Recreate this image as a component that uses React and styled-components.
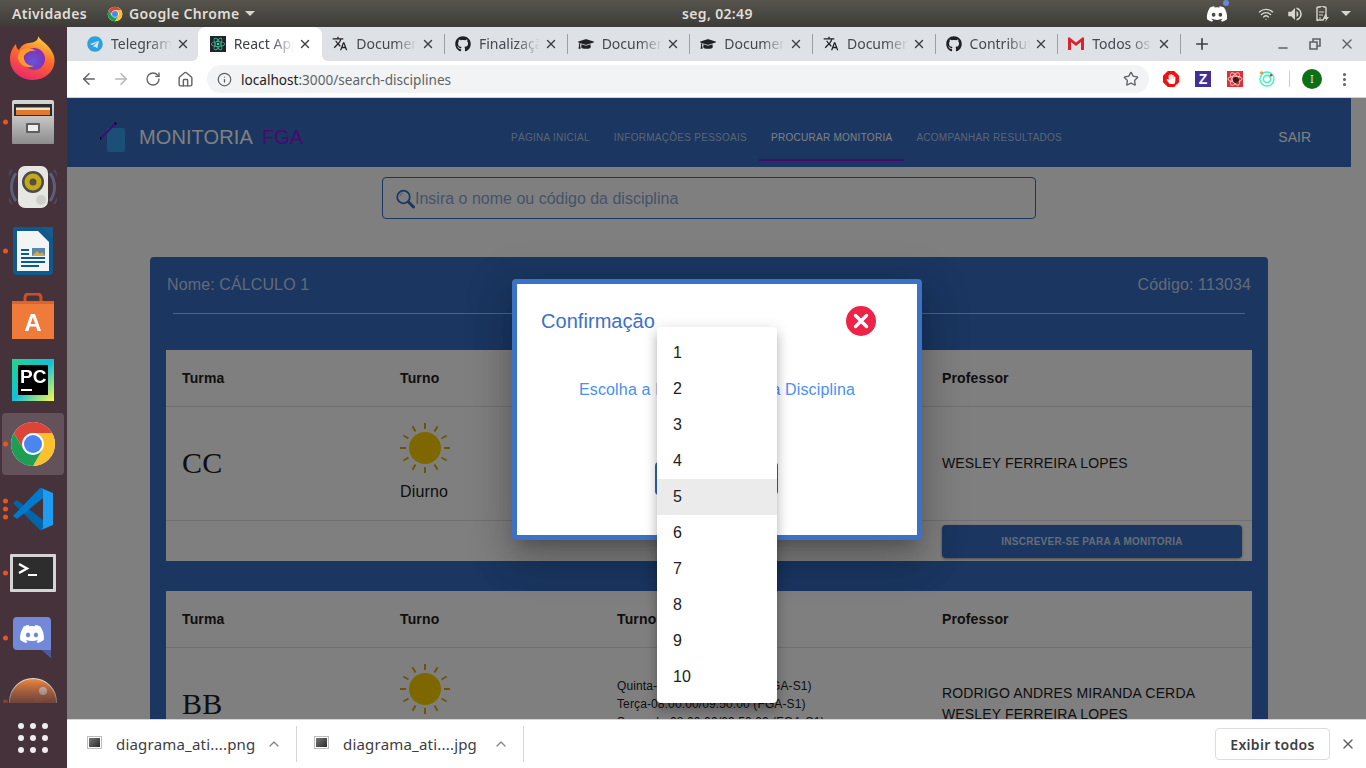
import React from 'react';
import styled, { createGlobalStyle } from 'styled-components';
import {
  ArrowLeft, ArrowRight, RotateCw, Home, Info, Star, MoreVertical, Plus, Minus, X, ChevronUp, Wifi,
} from 'lucide-react';
import { FaGithub, FaDiscord, FaTelegram, FaGraduationCap, FaHandPaper } from 'react-icons/fa';
import { MdTranslate, MdVolumeUp } from 'react-icons/md';
import { SiReact } from 'react-icons/si';

const uiFont = '"Noto Sans", "Open Sans", sans-serif';
const pageFont = '"Liberation Sans", Arial, sans-serif';
const blue = '#346cc2';

const GlobalStyle = createGlobalStyle`
  html, body {
    margin: 0;
    padding: 0;
    overflow: hidden;
    background: #46323a;
  }
  * { box-sizing: border-box; }
`;

const Desktop = styled.div`
  width: 1366px;
  height: 768px;
  display: flex;
  flex-direction: column;
  overflow: hidden;
`;

const TopBar = styled.div`
  height: 27px;
  flex: none;
  display: flex;
  align-items: center;
  background: linear-gradient(#57554d, #3c3b37);
  color: #e0ddd6;
  font: 600 14px ${uiFont};
  letter-spacing: 0.35px;
`;

const TopLeft = styled.div`
  width: 682px;
  display: flex;
  align-items: center;
  padding-left: 12px;
`;

const AppName = styled.div`
  display: flex;
  align-items: center;
  gap: 6px;
  margin-left: 20px;
`;

const Caret = styled.span`
  width: 0;
  height: 0;
  border-left: 5px solid transparent;
  border-right: 5px solid transparent;
  border-top: 5px solid #d8d5ce;
  margin-left: ${(p) => p.$left || 0}px;
`;

const TopRight = styled.div`
  margin-left: auto;
  display: flex;
  align-items: center;
  gap: 12px;
  padding-right: 15px;
  color: #d8d5ce;
`;

const TopDiscord = styled.span`
  position: relative;
  display: flex;
  color: #fff;
  margin-right: 18px;
  &::after {
    content: '';
    position: absolute;
    top: -3px;
    right: -1px;
    width: 6px;
    height: 6px;
    border-radius: 50%;
    background: #6f86d6;
  }
`;

const Body = styled.div`
  flex: 1;
  display: flex;
  min-height: 0;
`;

const Dock = styled.div`
  width: 67px;
  flex: none;
  display: flex;
  flex-direction: column;
  background: #46323a;
`;

const DockApps = styled.div`
  height: 676px;
  overflow: hidden;
  display: flex;
  flex-direction: column;
  gap: 2.4px;
  mask-image: linear-gradient(#000 650px, rgba(0, 0, 0, 0.35) 676px);
`;

const DockItem = styled.div`
  position: relative;
  flex: none;
  width: 62px;
  height: 62px;
  margin-left: 2px;
  border-radius: 4px;
  display: flex;
  align-items: center;
  justify-content: center;
  background: ${(p) => (p.$active ? '#64525a' : 'transparent')};
`;

const RunDots = styled.div`
  position: absolute;
  left: 1px;
  top: 50%;
  transform: translateY(-50%);
  display: flex;
  flex-direction: column;
  gap: 3px;
`;

const RunDot = styled.span`
  width: 5px;
  height: 5px;
  border-radius: 50%;
  background: #e95420;
`;

const AppGrid = styled.div`
  margin: 20px 0 0 18px;
  width: 30px;
  display: grid;
  grid-template-columns: repeat(3, 6px);
  gap: 6px;
`;

const GridDot = styled.span`
  width: 6px;
  height: 6px;
  border-radius: 50%;
  background: #eee;
`;

const Browser = styled.div`
  flex: 1;
  min-width: 0;
  display: flex;
  flex-direction: column;
`;

const TabStrip = styled.div`
  height: 34px;
  flex: none;
  display: flex;
  align-items: stretch;
  padding-left: 10px;
  background: #dee1e6;
`;

const Tab = styled.div`
  position: relative;
  width: ${(p) => (p.$active ? 124.67 : 122.67)}px;
  margin-left: ${(p) => (p.$active ? -2 : 0)}px;
  flex: none;
  display: flex;
  align-items: center;
  padding: 0 10px 1px ${(p) => (p.$active ? 12 : 10)}px;
  font: 14px ${uiFont};
  color: ${(p) => (p.$active ? '#3c4043' : '#45494f')};
  background: ${(p) => (p.$active ? '#fff' : 'transparent')};
  border-radius: 8px 8px 0 0;
  &::before {
    content: '';
    display: ${(p) => (p.$active ? 'block' : 'none')};
    position: absolute;
    left: -6px;
    bottom: 0;
    width: 6px;
    height: 6px;
    background: radial-gradient(circle at 0 0, transparent 6px, #fff 6px);
  }
  &::after {
    content: '';
    display: ${(p) => (p.$active || p.$line ? 'block' : 'none')};
    position: absolute;
    right: ${(p) => (p.$active ? -6 : 0)}px;
    bottom: ${(p) => (p.$active ? 0 : 7)}px;
    width: ${(p) => (p.$active ? 6 : 1)}px;
    height: ${(p) => (p.$active ? 6 : 20)}px;
    background: ${(p) => (p.$active ? 'radial-gradient(circle at 100% 0, transparent 6px, #fff 6px)' : '#9aa0a6')};
  }
`;

const TabIcon = styled.span`
  width: 16px;
  height: 16px;
  flex: none;
  display: flex;
  align-items: center;
  justify-content: center;
  color: ${(p) => p.$color || '#202124'};
`;

const ReactIcon = styled(TabIcon)`
  background: #20232a;
  color: #3fd6a5;
`;

const TabTitle = styled.span`
  flex: 1;
  margin-left: 8px;
  white-space: nowrap;
  overflow: hidden;
  mask-image: linear-gradient(to right, #000 58%, transparent 94%);
`;

const StripButton = styled.span`
  display: flex;
  align-items: center;
  color: #3c4043;
  margin-left: ${(p) => p.$left}px;
  padding-top: ${(p) => p.$top || 0}px;
`;

const Toolbar = styled.div`
  height: 37px;
  flex: none;
  display: flex;
  align-items: center;
  padding-left: 12px;
  background: #fff;
  border-bottom: 1px solid #d0d2d6;
`;

const NavButton = styled.span`
  width: 20px;
  display: flex;
  justify-content: center;
  margin-right: ${(p) => p.$gap ?? 12}px;
  color: ${(p) => (p.$off ? '#b4b6b9' : '#5f6368')};
`;

const UrlPill = styled.div`
  width: 942px;
  height: 28px;
  margin-left: 8px;
  padding: 0 10px 0 10px;
  display: flex;
  align-items: center;
  gap: 9px;
  border-radius: 14px;
  background: #f1f3f4;
  color: #5f6368;
  font: 13.6px ${uiFont};
`;

const UrlHost = styled.span`
  color: #202124;
`;

const UrlText = styled.span`
  flex: 1;
`;

const Extensions = styled.div`
  display: flex;
  align-items: center;
  margin-left: 14px;
  gap: 16px;
`;

const ZBadge = styled.span`
  width: 16px;
  height: 16px;
  display: flex;
  align-items: center;
  justify-content: center;
  background: #42309a;
  color: #fff;
  font: 700 14px ${pageFont};
`;

const StopBadge = styled.span`
  position: relative;
  display: flex;
  width: 16px;
  height: 16px;
  align-items: center;
  justify-content: center;
  color: #fff;
  background: #f01010;
  clip-path: polygon(30% 0, 70% 0, 100% 30%, 100% 70%, 70% 100%, 30% 100%, 0 70%, 0 30%);
`;

const ToolbarLine = styled.span`
  width: 1px;
  height: 16px;
  background: #ccc;
  margin-left: 14px;
`;

const Avatar = styled.span`
  width: 20px;
  height: 20px;
  margin-left: 12px;
  border-radius: 50%;
  background: #0d7016;
  color: #e8e8e8;
  display: flex;
  align-items: center;
  justify-content: center;
  font: 10px ${uiFont};
`;

const MenuDots = styled.span`
  display: flex;
  margin-left: 14px;
  color: #5f6368;
`;

const Page = styled.div`
  position: relative;
  flex: 1;
  min-height: 0;
  overflow: hidden;
  background: #fff;
  font-family: ${pageFont};
`;

const Scroller = styled.div`
  width: 1284px;
`;

const Header = styled.header`
  height: 69px;
  display: flex;
  align-items: center;
  padding: 15px 40px 6px 33px;
  background: ${blue};
  color: #fff;
`;

const Brand = styled.div`
  width: 399px;
  display: flex;
  align-items: center;
  font-size: 20px;
  letter-spacing: 0.1px;
`;

const BrandName = styled.span`
  margin-left: 13px;
`;

const BrandAccent = styled.span`
  margin-left: 9px;
  color: #9412dc;
`;

const Nav = styled.nav`
  display: flex;
  height: 48px;
`;

const NavTab = styled.div`
  display: flex;
  align-items: center;
  padding: 0 12px;
  font-size: 10px;
  letter-spacing: 0.27px;
  white-space: nowrap;
  color: ${(p) => (p.$active ? '#fff' : 'rgba(255, 255, 255, 0.65)')};
  box-shadow: ${(p) => (p.$active ? 'inset 0 -2px 0 #9412dc' : 'none')};
`;

const Logout = styled.div`
  margin-left: auto;
  font-size: 14px;
`;

const SearchBox = styled.div`
  width: 654px;
  height: 42px;
  margin: 10px auto 0;
  display: flex;
  align-items: center;
  padding: 1px 0 0 13px;
  border: 1px solid ${blue};
  border-radius: 4px;
  color: #8ba6d3;
  font-size: 16px;
`;

const Card = styled.section`
  width: 1118px;
  margin: 38px auto 0;
  padding: 0 16px;
  background: ${blue};
  border-radius: 4px;
`;

const CardTitle = styled.div`
  height: 54px;
  display: flex;
  align-items: center;
  justify-content: space-between;
  padding: 1px 1px 0 1px;
  color: rgba(255, 255, 255, 0.72);
  font-size: 16px;
  letter-spacing: 0.12px;
`;

const Divider = styled.hr`
  margin: 2px 7px 36px;
  border: 0;
  border-top: 1px solid rgba(255, 255, 255, 0.6);
`;

const ClassTable = styled.div`
  background: #fff;
  color: #212121;
  margin-bottom: 30px;
`;

const ClassRow = styled.div`
  display: grid;
  grid-template-columns: 218px 217px 325px 326px;
  min-height: ${(p) => p.$height}px;
  padding-bottom: ${(p) => p.$bottom || 0}px;
  align-items: center;
  border-bottom: ${(p) => (p.$last ? '0' : '1px solid #e0e0e0')};
`;

const HeadCell = styled.div`
  padding-left: 16px;
  font-size: 14px;
  font-weight: 700;
  letter-spacing: 0.15px;
`;

const Cell = styled.div`
  padding-left: 16px;
  font-size: 14px;
  line-height: 21px;
  letter-spacing: 0.15px;
`;

const ClassName = styled(Cell)`
  margin-top: -1px;
  font: 30px "Liberation Serif", "Times New Roman", serif;
`;

const ShiftCell = styled(Cell)`
  display: flex;
  flex-direction: column;
  align-items: flex-start;
  gap: 8px;
  margin-top: -2px;
  font-size: 16px;
`;

const ScheduleCell = styled(Cell)`
  font-size: 12px;
  line-height: 18px;
  letter-spacing: 0.12px;
`;

const SubscribeButton = styled.div`
  height: 33px;
  width: 300px;
  margin-top: 1px;
  border-radius: 4px;
  background: ${blue};
  color: rgba(255, 255, 255, 0.75);
  box-shadow: 0 1px 3px rgba(0, 0, 0, 0.4);
  display: flex;
  align-items: center;
  justify-content: center;
  font-size: 10px;
  font-weight: 700;
  letter-spacing: 0.25px;
`;

const ButtonCell = styled.div`
  padding-left: 16px;
`;

const Backdrop = styled.div`
  position: absolute;
  inset: 0;
  background: rgba(0, 0, 0, 0.5);
`;

const Modal = styled.div`
  position: absolute;
  left: 445px;
  top: 181px;
  width: 410px;
  height: 261px;
  padding: 0 41px 0 24px;
  background: #fff;
  border: 5px solid #3b71c6;
  border-radius: 4px;
  box-shadow: 0 11px 15px -7px rgba(0, 0, 0, 0.2), 0 24px 38px 3px rgba(0, 0, 0, 0.14), 0 9px 46px 8px rgba(0, 0, 0, 0.12);
`;

const ModalHead = styled.div`
  display: flex;
  align-items: center;
  justify-content: space-between;
  height: 74px;
  color: #3b71c6;
  font-size: 20px;
  letter-spacing: 0.05px;
`;

const ModalText = styled.div`
  margin: 23px -17px 0 0;
  color: #4a90f2;
  font-size: 16px;
  line-height: 18px;
  letter-spacing: 0.15px;
  text-align: center;
`;

const ModalButton = styled.div`
  width: 123px;
  height: 33px;
  margin: 63px auto 0;
  position: relative;
  left: 8px;
  background: #2f66b8;
  border-radius: 4px;
`;

const Menu = styled.ul`
  position: absolute;
  left: 590px;
  top: 229px;
  width: 120px;
  margin: 0;
  padding: 8px 0;
  list-style: none;
  background: #fff;
  border-radius: 4px;
  box-shadow: 0 5px 5px -3px rgba(0, 0, 0, 0.2), 0 8px 10px 1px rgba(0, 0, 0, 0.14), 0 3px 14px 2px rgba(0, 0, 0, 0.12);
`;

const MenuItem = styled.li`
  height: 36px;
  padding-left: 16px;
  display: flex;
  align-items: center;
  font-size: 16px;
  color: #212121;
  background: ${(p) => (p.$hover ? '#ebebeb' : 'transparent')};
`;

const Downloads = styled.div`
  height: 49px;
  flex: none;
  display: flex;
  align-items: center;
  padding-right: 10px;
  background: #fff;
  border-top: 1px solid #d4d4d4;
  font: 14px ${uiFont};
  color: #3c4043;
`;

const Download = styled.div`
  width: ${(p) => p.$width}px;
  height: 36px;
  display: flex;
  align-items: center;
  padding-left: ${(p) => p.$pad}px;
  border-right: 1px solid #d6d6d6;
`;

const FileThumb = styled.span`
  width: 15px;
  height: 13px;
  margin: -4px 14px 0 0;
  flex: none;
  border: 1px solid #bdbdbd;
  box-shadow: inset 0 0 0 1px #fff;
  background: linear-gradient(135deg, #808080, #222);
`;

const FileName = styled.span`
  flex: 1;
  font-size: 15px;
  letter-spacing: 0.2px;
  white-space: nowrap;
`;

const FileArrow = styled.span`
  display: flex;
  color: #80868b;
  margin-right: 14px;
`;

const ShowAll = styled.div`
  margin-left: auto;
  width: 115px;
  height: 32px;
  display: flex;
  align-items: center;
  justify-content: center;
  border: 1px solid #dadce0;
  border-radius: 4px;
  font-weight: 600;
  font-size: 14px;
  letter-spacing: 0.3px;
`;

const CloseBar = styled.span`
  display: flex;
  margin-left: 10px;
  color: #5f6368;
`;

function ChromeLogo({ size }) {
  return (
    <svg width={size} height={size} viewBox="0 0 48 48">
      <circle cx="24" cy="24" r="22" fill="#fff" />
      <path d="M24 13H43A22 22 0 0 0 5 13L14.5 29.5A11 11 0 0 1 24 13Z" fill="#db4437" />
      <path d="M43 13A22 22 0 0 1 24 46L33.5 29.5A11 11 0 0 0 24 13Z" fill="#fbc02d" />
      <path d="M24 46A22 22 0 0 1 5 13L14.5 29.5A11 11 0 0 0 33.5 29.5Z" fill="#1e9e54" />
      <circle cx="24" cy="24" r="9" fill="#4a85f0" />
    </svg>
  );
}

function Firefox() {
  return (
    <svg width="46" height="46" viewBox="0 0 46 46">
      <defs>
        <linearGradient id="ffBody" x1="0.7" y1="0" x2="0.3" y2="1">
          <stop offset="0" stopColor="#ffd43a" />
          <stop offset="0.45" stopColor="#ff6a2a" />
          <stop offset="1" stopColor="#e8256f" />
        </linearGradient>
        <radialGradient id="ffCore" cx="0.45" cy="0.6" r="0.6">
          <stop offset="0" stopColor="#5f58d8" />
          <stop offset="1" stopColor="#8b2bb8" />
        </radialGradient>
      </defs>
      <path d="M28 1C31 7 40 9 44 21C47 34 37 45 23 45C10 45 0 36 0 24C0 17 3 12 6 9C6 12 7 14 9 15C11 11 15 8 19 8C24 8 29 5 28 1Z" fill="url(#ffBody)" />
      <circle cx="24" cy="24" r="11" fill="url(#ffCore)" />
      <path d="M11 15C16 12 23 13 26 16C21 15 16 17 14 21C13 26 17 31 24 31C18 34 10 31 8 24C7 20 9 17 11 15Z" fill="#ff9a2e" />
    </svg>
  );
}

function Cabinet() {
  return (
    <svg width="44" height="44" viewBox="0 0 44 44">
      <defs>
        <linearGradient id="cabBody" x1="0" y1="0" x2="0" y2="1">
          <stop offset="0" stopColor="#d6d6d6" />
          <stop offset="1" stopColor="#8e8e8e" />
        </linearGradient>
        <linearGradient id="cabFront" x1="0" y1="0" x2="0" y2="1">
          <stop offset="0" stopColor="#c6c6c6" />
          <stop offset="1" stopColor="#8c8c8c" />
        </linearGradient>
      </defs>
      <rect x="1" y="0" width="42" height="44" rx="2" fill="url(#cabBody)" />
      <rect x="3" y="4" width="38" height="12" fill="#2b2b2b" />
      <rect x="5" y="7" width="34" height="8" fill="#e07a2c" />
      <rect x="5" y="8" width="34" height="2" fill="#f6e2c8" />
      <rect x="1" y="16" width="42" height="28" rx="1" fill="url(#cabFront)" />
      <rect x="15" y="23" width="14" height="10" rx="1" fill="#5e5e5e" />
      <rect x="17" y="25" width="10" height="6" fill="#eee" />
    </svg>
  );
}

function Speaker() {
  return (
    <svg width="48" height="44" viewBox="0 0 48 44">
      <path d="M7 8A24 24 0 0 0 7 36M41 8A24 24 0 0 1 41 36" fill="none" stroke="#5c5f78" strokeWidth="3" />
      <path d="M3 5A28 28 0 0 0 3 39M45 5A28 28 0 0 1 45 39" fill="none" stroke="#50485c" strokeWidth="2" />
      <rect x="9" y="1" width="30" height="42" rx="7" fill="#e6e6e2" />
      <circle cx="24" cy="17" r="11" fill="#4b4b48" />
      <circle cx="24" cy="17" r="8.5" fill="#c4a81c" />
      <circle cx="24" cy="17" r="3.5" fill="#57503a" />
      <circle cx="32" cy="35" r="5" fill="#cfcfca" />
    </svg>
  );
}

function Writer() {
  return (
    <svg width="40" height="48" viewBox="0 0 40 48">
      <path d="M2 0H27L40 13V44Q40 48 36 48H4Q0 48 0 44V2Q0 0 2 0Z" fill="#0f5a8c" />
      <path d="M4 4H25L36 15V44H4Z" fill="#f3f4f4" />
      <path d="M27 0L40 13V0Z" fill="#135c8d" />
      <rect x="8" y="22" width="8" height="2" fill="#0f5a8c" />
      <rect x="8" y="26" width="8" height="2" fill="#0f5a8c" />
      <rect x="8" y="30" width="24" height="2" fill="#0f5a8c" />
      <rect x="8" y="34" width="24" height="2" fill="#0f5a8c" />
      <rect x="8" y="38" width="18" height="2" fill="#0f5a8c" />
      <rect x="19" y="21" width="13" height="8" fill="#5a88a8" />
      <path d="M19 29L24 24L27 27L29 25L32 29Z" fill="#d8a840" />
    </svg>
  );
}

function StoreBag() {
  return (
    <svg width="42" height="46" viewBox="0 0 42 46">
      <path d="M13 10V5Q13 1 17 1H25Q29 1 29 5V10" fill="none" stroke="#c9502a" strokeWidth="3" />
      <rect y="8" width="42" height="38" fill="#ef7b3b" />
      <rect y="8" width="42" height="3" fill="#d9642c" />
      <text x="21" y="38" textAnchor="middle" fontFamily="Liberation Sans" fontWeight="700" fontSize="24" fill="#fff">A</text>
    </svg>
  );
}

function PyCharm() {
  return (
    <svg width="42" height="42" viewBox="0 0 42 42">
      <defs>
        <linearGradient id="pcBg" x1="0" y1="0" x2="1" y2="1">
          <stop offset="0" stopColor="#21d789" />
          <stop offset="0.5" stopColor="#12c0d8" />
          <stop offset="1" stopColor="#fcf84a" />
        </linearGradient>
      </defs>
      <rect width="42" height="42" fill="url(#pcBg)" />
      <rect x="6" y="6" width="30" height="30" fill="#000" />
      <text x="8" y="24" fontFamily="Liberation Sans" fontWeight="700" fontSize="19" fill="#fff">PC</text>
      <rect x="9" y="30" width="11" height="2" fill="#fff" />
    </svg>
  );
}

function VsCode() {
  return (
    <svg width="42" height="42" viewBox="0 0 42 42">
      <path d="M1 15L5 12L31 32V41L28 42Z" fill="#0065a9" />
      <path d="M1 28L5 31L31 10V1L28 0Z" fill="#007acc" />
      <path d="M29 0L41 5V37L29 42L31 40V2Z" fill="#1f9cf0" />
    </svg>
  );
}

function TerminalIcon() {
  return (
    <svg width="46" height="38" viewBox="0 0 46 38">
      <rect width="46" height="38" rx="1" fill="#d4d4d4" />
      <rect x="3" y="3" width="40" height="32" fill="#2d2d2d" />
      <path d="M9 10L17 14.5L9 19" fill="none" stroke="#fff" strokeWidth="2.4" />
      <rect x="18" y="20" width="9" height="2" fill="#fff" />
    </svg>
  );
}

function DiscordTile() {
  return (
    <svg width="40" height="42" viewBox="0 0 40 42">
      <path d="M4 0H34Q38 0 38 4V41L29 33H4Q0 33 0 29V4Q0 0 4 0Z" fill="#7289da" />
      <path d="M29 33L38 41V33Z" fill="#4a5a9c" />
      <foreignObject x="6" y="4" width="26" height="26">
        <FaDiscord size={26} color="#fff" />
      </foreignObject>
    </svg>
  );
}

function Postman() {
  return (
    <svg width="48" height="48" viewBox="0 0 48 48">
      <defs>
        <linearGradient id="pmBg" x1="0" y1="0" x2="0" y2="1">
          <stop offset="0" stopColor="#f68c42" />
          <stop offset="0.6" stopColor="#b4603a" />
        </linearGradient>
      </defs>
      <circle cx="24" cy="24" r="24" fill="#e8e4e0" />
      <circle cx="24" cy="24" r="23" fill="url(#pmBg)" />
      <path d="M16 36L30 16L35 20L22 38Z" fill="#c87048" />
      <circle cx="34" cy="13" r="4" fill="#e8d0c0" />
    </svg>
  );
}

function Gmail() {
  return (
    <svg width="16" height="13" viewBox="0 0 16 13">
      <path d="M3 5V13H0V1L1 0L8 5.5L15 0L16 1V13H13V5L8 9Z" fill="#d9232d" />
    </svg>
  );
}

function AtomBadge() {
  return (
    <svg width="16" height="16" viewBox="0 0 16 16">
      <rect width="16" height="16" fill="#e02f36" />
      <g fill="none" stroke="#f8c8c8" strokeWidth="1">
        <ellipse cx="8" cy="8" rx="7" ry="3" />
        <ellipse cx="8" cy="8" rx="7" ry="3" transform="rotate(60 8 8)" />
        <ellipse cx="8" cy="8" rx="7" ry="3" transform="rotate(120 8 8)" />
      </g>
      <circle cx="9" cy="9" r="3" fill="#3a1a1a" />
    </svg>
  );
}

function TargetBadge() {
  return (
    <svg width="16" height="16" viewBox="0 0 16 16">
      <circle cx="8" cy="8" r="7" fill="none" stroke="#3ff0c0" strokeWidth="1.3" />
      <circle cx="8" cy="8" r="3.6" fill="none" stroke="#3ff0c0" strokeWidth="1.6" />
      <circle cx="2.5" cy="1.8" r="1.5" fill="#f58a2a" />
      <circle cx="12" cy="4.3" r="1.3" fill="#e0352a" />
    </svg>
  );
}

function Battery() {
  return (
    <svg width="14" height="16" viewBox="0 0 14 16">
      <path d="M3 1H4V0H8V1H9Q10 1 10 2V8L7 14H2Q1 15 1 14V2Q1 1 3 1Z" fill="none" stroke="#d8d5ce" strokeWidth="1.4" />
      <path d="M3 6H8M3 9H7M3 12H5" stroke="#d8d5ce" />
      <path d="M11 8L8 13H10L9 16L13 11H11Z" fill="#d8d5ce" />
    </svg>
  );
}

function Sun() {
  const rays = Array.from({ length: 12 }, (_, i) => i * 30);
  return (
    <svg width="50" height="50" viewBox="0 0 50 50">
      {rays.map((angle) => (
        <rect key={angle} x="24" y="0" width="2" height="6" fill="#d4ad12" transform={`rotate(${angle} 25 25)`} />
      ))}
      <circle cx="25" cy="25" r="16" fill="#ffcf00" />
    </svg>
  );
}

function ProjectLogo() {
  return (
    <svg width="26" height="30" viewBox="0 0 26 30">
      <rect x="7" y="6" width="18" height="24" rx="2" fill="#34a0f0" />
      <path d="M0 17L16 1" stroke="#9412dc" strokeWidth="2" />
      <path d="M0 17L1 16M15 2L16 1" stroke="#000" strokeWidth="2" />
    </svg>
  );
}

function SearchIcon() {
  return (
    <svg width="19" height="20" viewBox="0 0 19 20">
      <circle cx="7.5" cy="8" r="6.3" fill="none" stroke={blue} strokeWidth="1.8" />
      <path d="M3.8 7.5A4 4 0 0 1 7 4" fill="none" stroke="#9dbbe6" strokeWidth="1" />
      <path d="M12.5 13L17.5 18" stroke={blue} strokeWidth="3" strokeLinecap="round" />
    </svg>
  );
}

function CloseCircle() {
  return (
    <svg width="30" height="30" viewBox="0 0 30 30">
      <circle cx="15" cy="15" r="15" fill="#ee2348" />
      <path d="M9.5 9.5L20.5 20.5M20.5 9.5L9.5 20.5" stroke="#fff" strokeWidth="3.4" strokeLinecap="round" />
    </svg>
  );
}

const dockApps = [
  { icon: <Firefox />, dots: 0 },
  { icon: <Cabinet />, dots: 1 },
  { icon: <Speaker />, dots: 0 },
  { icon: <Writer />, dots: 1 },
  { icon: <StoreBag />, dots: 0 },
  { icon: <PyCharm />, dots: 0 },
  { icon: <ChromeLogo size={48} />, dots: 1, active: true },
  { icon: <VsCode />, dots: 3 },
  { icon: <TerminalIcon />, dots: 1 },
  { icon: <DiscordTile />, dots: 1 },
  { icon: <Postman />, dots: 1 },
];

const translateIcon = <MdTranslate size={17} />;
const capIcon = <FaGraduationCap size={16} />;
const githubIcon = <FaGithub size={16} />;

const tabs = [
  { title: 'Telegram', icon: <TabIcon $color="#2ba2e0"><FaTelegram size={16} /></TabIcon> },
  { title: 'React App', icon: <ReactIcon><SiReact size={14} /></ReactIcon>, active: true },
  { title: 'Documentos', icon: <TabIcon>{translateIcon}</TabIcon>, line: true },
  { title: 'Finalização', icon: <TabIcon>{githubIcon}</TabIcon>, line: true },
  { title: 'Documentos', icon: <TabIcon>{capIcon}</TabIcon>, line: true },
  { title: 'Documentos', icon: <TabIcon>{capIcon}</TabIcon>, line: true },
  { title: 'Documentos', icon: <TabIcon>{translateIcon}</TabIcon>, line: true },
  { title: 'Contribute', icon: <TabIcon>{githubIcon}</TabIcon>, line: true },
  { title: 'Todos os', icon: <TabIcon><Gmail /></TabIcon>, line: true },
];

const navLinks = ['PÁGINA INICIAL', 'INFORMAÇÕES PESSOAIS', 'PROCURAR MONITORIA', 'ACOMPANHAR RESULTADOS'];
const columns = ['Turma', 'Turno', 'Turno', 'Professor'];
const priorities = [1, 2, 3, 4, 5, 6, 7, 8, 9, 10];

function ClassBlock({ name, schedule, teachers, withButton }) {
  return (
    <ClassTable>
      <ClassRow $height={57}>
        {columns.map((column, i) => <HeadCell key={i}>{column}</HeadCell>)}
      </ClassRow>
      <ClassRow $height={114} $bottom={1}>
        <ClassName>{name}</ClassName>
        <ShiftCell>
          <Sun />
          Diurno
        </ShiftCell>
        <ScheduleCell>
          {schedule.map((line) => <div key={line}>{line}</div>)}
        </ScheduleCell>
        <Cell>
          {teachers.map((teacher) => <div key={teacher}>{teacher}</div>)}
        </Cell>
      </ClassRow>
      {withButton && (
        <ClassRow $height={40} $last>
          <span />
          <span />
          <span />
          <ButtonCell>
            <SubscribeButton>INSCREVER-SE PARA A MONITORIA</SubscribeButton>
          </ButtonCell>
        </ClassRow>
      )}
    </ClassTable>
  );
}

export default function App() {
  return (
    <Desktop>
      <GlobalStyle />
      <TopBar>
        <TopLeft>
          Atividades
          <AppName>
            <ChromeLogo size={16} />
            Google Chrome
            <Caret />
          </AppName>
        </TopLeft>
        seg, 02:49
        <TopRight>
          <TopDiscord><FaDiscord size={22} /></TopDiscord>
          <Wifi size={16} />
          <MdVolumeUp size={18} />
          <Battery />
          <Caret $left={-1} />
        </TopRight>
      </TopBar>
      <Body>
        <Dock>
          <DockApps>
            {dockApps.map((app, i) => (
              <DockItem key={i} $active={app.active}>
                {app.dots > 0 && (
                  <RunDots>
                    {Array.from({ length: app.dots }, (_, d) => <RunDot key={d} />)}
                  </RunDots>
                )}
                {app.icon}
              </DockItem>
            ))}
          </DockApps>
          <AppGrid>
            {Array.from({ length: 9 }, (_, i) => <GridDot key={i} />)}
          </AppGrid>
        </Dock>
        <Browser>
          <TabStrip>
            {tabs.map((tab, i) => (
              <Tab key={i} $active={tab.active} $line={tab.line}>
                {tab.icon}
                <TabTitle>{tab.title}</TabTitle>
                <X size={14} strokeWidth={2.4} color="#3c4043" />
              </Tab>
            ))}
            <StripButton $left={12}><Plus size={18} strokeWidth={2.2} /></StripButton>
            <StripButton $left={65} $top={8}><Minus size={14} strokeWidth={2.4} color="#5f6368" /></StripButton>
            <StripButton $left={18}>
              <svg width="14" height="14" viewBox="0 0 14 14">
                <path d="M2 5H9V12H2ZM5 5V2H12V9H9" fill="none" stroke="#5f6368" strokeWidth="1.6" />
              </svg>
            </StripButton>
            <StripButton $left={17}><X size={16} strokeWidth={2} color="#5f6368" /></StripButton>
          </TabStrip>
          <Toolbar>
            <NavButton><ArrowLeft size={18} strokeWidth={2} /></NavButton>
            <NavButton $off><ArrowRight size={18} strokeWidth={2} /></NavButton>
            <NavButton><RotateCw size={16} strokeWidth={2} /></NavButton>
            <NavButton $gap={4}><Home size={17} strokeWidth={2} /></NavButton>
            <UrlPill>
              <Info size={15} />
              <UrlText><UrlHost>localhost</UrlHost>:3000/search-disciplines</UrlText>
              <Star size={16} strokeWidth={2} />
            </UrlPill>
            <Extensions>
              <StopBadge><FaHandPaper size={10} /></StopBadge>
              <ZBadge>Z</ZBadge>
              <AtomBadge />
              <TargetBadge />
            </Extensions>
            <ToolbarLine />
            <Avatar>I</Avatar>
            <MenuDots><MoreVertical size={17} strokeWidth={2.4} /></MenuDots>
          </Toolbar>
          <Page>
            <Scroller>
              <Header>
                <Brand>
                  <ProjectLogo />
                  <BrandName>MONITORIA</BrandName>
                  <BrandAccent>FGA</BrandAccent>
                </Brand>
                <Nav>
                  {navLinks.map((link, i) => <NavTab key={link} $active={i === 2}>{link}</NavTab>)}
                </Nav>
                <Logout>SAIR</Logout>
              </Header>
              <SearchBox>
                <SearchIcon />
                Insira o nome ou código da disciplina
              </SearchBox>
              <Card>
                <CardTitle>
                  <span>Nome: CÁLCULO 1</span>
                  <span>Código: 113034</span>
                </CardTitle>
                <Divider />
                <ClassBlock
                  name="CC"
                  schedule={['Quinta-08:00:00/09:50:00 (FGA-S1)', 'Terça-08:00:00/09:50:00 (FGA-S1)']}
                  teachers={['WESLEY FERREIRA LOPES']}
                  withButton
                />
                <ClassBlock
                  name="BB"
                  schedule={[
                    'Quinta-08:00:00/09:50:00 (FGA-S1)',
                    'Terça-08:00:00/09:50:00 (FGA-S1)',
                    'Segunda-08:00:00/09:50:00 (FGA-S1)',
                  ]}
                  teachers={['RODRIGO ANDRES MIRANDA CERDA', 'WESLEY FERREIRA LOPES']}
                />
              </Card>
            </Scroller>
            <Backdrop />
            <Modal>
              <ModalHead>
                Confirmação
                <CloseCircle />
              </ModalHead>
              <ModalText>Escolha a Prioridade para a Disciplina</ModalText>
              <ModalButton />
            </Modal>
            <Menu>
              {priorities.map((n) => <MenuItem key={n} $hover={n === 5}>{n}</MenuItem>)}
            </Menu>
          </Page>
          <Downloads>
            <Download $width={230} $pad={20}>
              <FileThumb />
              <FileName>diagrama_ati....png</FileName>
              <FileArrow><ChevronUp size={16} /></FileArrow>
            </Download>
            <Download $width={227} $pad={17}>
              <FileThumb />
              <FileName>diagrama_ati....jpg</FileName>
              <FileArrow><ChevronUp size={16} /></FileArrow>
            </Download>
            <ShowAll>Exibir todos</ShowAll>
            <CloseBar><X size={16} strokeWidth={2.2} /></CloseBar>
          </Downloads>
        </Browser>
      </Body>
    </Desktop>
  );
}
